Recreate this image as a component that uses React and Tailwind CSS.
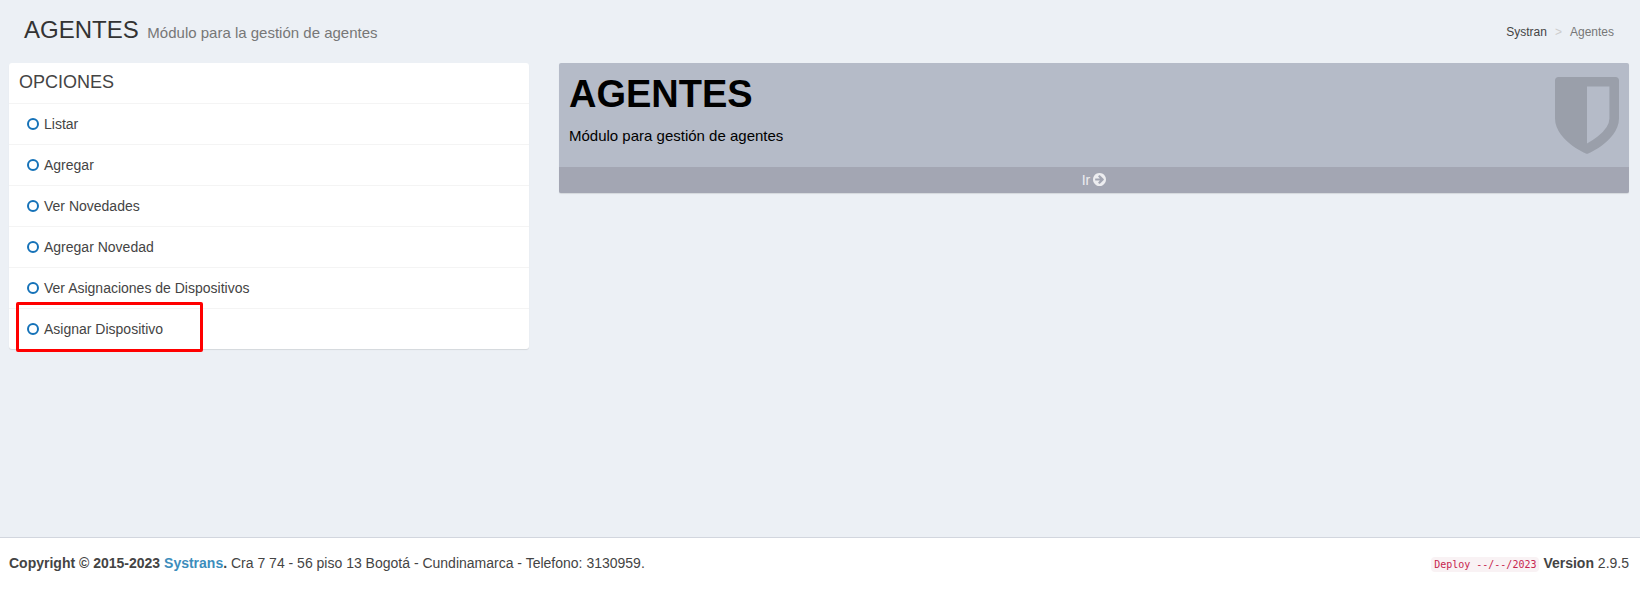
const options = [
  { label: 'Listar' },
  { label: 'Agregar' },
  { label: 'Ver Novedades' },
  { label: 'Agregar Novedad' },
  { label: 'Ver Asignaciones de Dispositivos' },
  { label: 'Asignar Dispositivo', highlighted: true },
];

function CircleIcon() {
  return (
    <svg viewBox="0 0 12 12" className="size-3 text-[#1572b8]" aria-hidden="true">
      <circle cx="6" cy="6" r="5" fill="none" stroke="currentColor" strokeWidth="2" />
    </svg>
  );
}

function ShieldIcon() {
  return (
    <svg viewBox="256 128 1280 1536" className="w-16 text-black/15" fill="currentColor" aria-hidden="true">
      <path d="M1344 960v-640h-448v1137q119-63 213-137 235-184 235-360zm192-768v768q0 86-33.5 170.5t-83 150-118 127.5-126.5 103-121 77.5-89.5 49.5-42.5 20q-12 6-26 6t-26-6q-16-7-42.5-20t-89.5-49.5-121-77.5-126.5-103-118-127.5-83-150-33.5-170.5v-768q0-26 19-45t45-19h1152q26 0 45 19t19 45z" />
    </svg>
  );
}

function ArrowCircleIcon() {
  return (
    <svg viewBox="128 128 1536 1536" className="size-[13px]" fill="currentColor" aria-hidden="true">
      <path d="M1413 896q0-27-18-45l-91-91-362-362q-18-18-45-18t-45 18l-91 91q-18 18-18 45t18 45l189 189h-502q-26 0-45 19t-19 45v128q0 26 19 45t45 19h502l-189 189q-18 18-18 45t18 45l91 91q18 18 45 18t45-18l362-362 91-91q18-18 18-45zm251 0q0 209-103 385.5t-279.5 279.5-385.5 103-385.5-103-279.5-279.5-103-385.5 103-385.5 279.5-279.5 385.5-103 385.5 103 279.5 279.5 103 385.5z" />
    </svg>
  );
}

function PageHeader() {
  return (
    <header className="flex items-center justify-between pt-4 pr-[26px] pl-6">
      <h1 className="text-2xl/7 text-[#333]">
        AGENTES <small className="pl-0.5 text-[15px] text-[#777]">Módulo para la gestión de agentes</small>
      </h1>
      <nav aria-label="Ruta">
        <ol className="flex text-xs/5">
          <li>
            <a href="#systran" className="text-[#444]">Systran</a>
          </li>
          <li aria-hidden="true" className="px-2 text-[#ccc]">&gt;</li>
          <li className="text-[#777]">Agentes</li>
        </ol>
      </nav>
    </header>
  );
}

function OptionsBox() {
  return (
    <section className="rounded-[3px] bg-white shadow-[0_1px_1px_rgba(0,0,0,0.1)]">
      <h2 className="px-2.5 pt-[7px] pb-[9px] text-lg/6 text-[#444]">OPCIONES</h2>
      <ul>
        {options.map(({ label, highlighted }) => (
          <li key={label} className="relative border-t border-[#f4f4f4]">
            <a href="#opcion" className="flex items-center gap-[5px] px-[18px] py-2.5 text-sm/5 text-[#444]">
              <CircleIcon />
              {label}
            </a>
            {highlighted && (
              <span className="pointer-events-none absolute -top-[7px] -bottom-[3px] left-[7px] w-[187px] rounded-xs border-3 border-[#ff0000]" />
            )}
          </li>
        ))}
      </ul>
    </section>
  );
}

function ModuleCard() {
  return (
    <section className="rounded-xs bg-[#b5bbc8] shadow-[0_1px_1px_rgba(0,0,0,0.1)] lg:col-span-2">
      <div className="flex justify-between px-2.5 pt-2.5 pb-[13px]">
        <div className="text-black">
          <h3 className="text-[38px]/[42px] font-bold">AGENTES</h3>
          <p className="pt-2.5 text-[15px]/[21px]">Módulo para gestión de agentes</p>
        </div>
        <div className="pt-1">
          <ShieldIcon />
        </div>
      </div>
      <a href="#ir" className="flex items-center justify-center gap-[3px] rounded-b-xs bg-[#a3a6b3] py-[3px] text-sm/5 text-white/80">
        Ir <ArrowCircleIcon />
      </a>
    </section>
  );
}

function Footer() {
  return (
    <footer className="flex flex-wrap justify-between border-t border-[#d2d6de] bg-white pt-[15px] pr-[11px] pb-[18px] pl-[9px] text-sm/5 text-[#444]">
      <p>
        <strong>
          Copyright © 2015-2023 <a href="#systrans" className="text-[#3c8dbc]">Systrans</a>.
        </strong>{' '}
        Cra 7 74 - 56 piso 13 Bogotá - Cundinamarca - Telefono: 3130959.
      </p>
      <p>
        <code className="rounded bg-[#f9f2f4] px-[3px] py-0.5 font-['DejaVu_Sans_Mono',monospace] text-[10px] text-[#c7254e]">
          Deploy --/--/2023
        </code>{' '}
        <b>Version</b> 2.9.5
      </p>
    </footer>
  );
}

export default function App() {
  return (
    <div className="flex min-h-screen flex-col bg-[#ecf0f5] font-['Liberation_Sans',Arial,sans-serif]">
      <PageHeader />
      <main className="grid flex-1 grid-cols-1 items-start gap-[30px] pt-4 pr-[11px] pb-4 pl-[9px] lg:grid-cols-3">
        <OptionsBox />
        <ModuleCard />
      </main>
      <Footer />
    </div>
  );
}
